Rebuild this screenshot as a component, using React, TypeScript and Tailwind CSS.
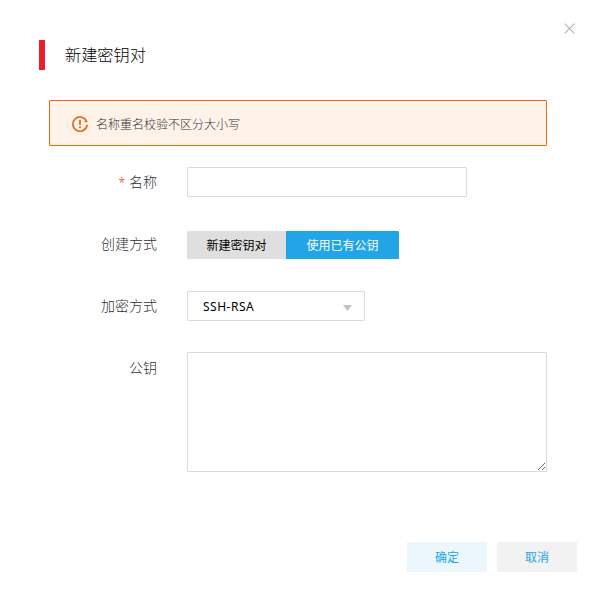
import { useState } from 'react';
import type { ReactNode } from 'react';

const METHODS = [
  { id: 'create', label: '新建密钥对', width: 'w-[99px]' },
  { id: 'import', label: '使用已有公钥', width: 'w-[113px]' },
];

function CloseIcon() {
  return (
    <svg width="11" height="11" viewBox="0 0 11 11" fill="none" stroke="#a9b4bf" strokeWidth="1.1">
      <path d="M0.7 0.7l9.6 9.6M10.3 0.7l-9.6 9.6" />
    </svg>
  );
}

// Open ring with an exclamation mark; the gap sits on the right side.
function WarnIcon() {
  return (
    <svg width="16" height="16" viewBox="0 0 16 16" fill="none" stroke="#ea6a1f">
      <path d="M14.7 5.7A7.1 7.1 0 1 0 15.1 8.6" strokeWidth="1.7" />
      <path d="M12.4 5.6h3" strokeWidth="1.2" />
      <path d="M8 4v5" strokeWidth="1.8" />
      <path d="M8 10.2v1.8" strokeWidth="1.8" />
    </svg>
  );
}

function Field({
  label,
  required = false,
  className = '',
  children,
}: {
  label: string;
  required?: boolean;
  className?: string;
  children: ReactNode;
}) {
  return (
    <div className={`flex items-start ${className}`}>
      <div className="mr-[30px] h-[30px] w-[108px] text-right text-[14px] leading-[30px] font-light text-[#2c2f35]">
        {required && <span className="mr-1 text-[12px] leading-none font-normal text-[#e0706c]">*</span>}
        {label}
      </div>
      {children}
    </div>
  );
}

export default function App() {
  const [method, setMethod] = useState('import');
  const [name, setName] = useState('');
  const [publicKey, setPublicKey] = useState('');

  return (
    <div className="flex h-[590px] w-[596px] flex-col bg-white font-['Noto_Sans','Noto_Sans_CJK_SC',sans-serif] text-[12px] text-black">
      <header className="flex h-[100px] items-start justify-between pr-[21px] pl-[39px]">
        <div className="mt-10 flex items-start">
          <span className="h-[29.5px] w-[6px] border-r border-[#f0107c] bg-[#e8201f]" />
          <h1 className="ml-5 text-[16.2px] leading-[30px] font-light">新建密钥对</h1>
        </div>
        <button type="button" aria-label="关闭" className="mt-[23px]">
          <CloseIcon />
        </button>
      </header>

      <main className="mr-[49px] ml-[49px] flex flex-col">
        <div className="flex h-[46px] w-[498px] items-center rounded-[1px] border border-[#ea6a0f] bg-[#fef2e9] pt-[2px] pl-[22px] text-[#333]">
          <WarnIcon />
          <span className="ml-2 pt-px leading-[18px] font-light">名称重名校验不区分大小写</span>
        </div>

        <Field label="名称" required className="mt-[21px]">
          <input
            value={name}
            onChange={(e) => setName(e.target.value)}
            className="h-[30px] w-[280px] rounded-[1px] border border-[#d8dbe4] px-[15px] outline-none"
          />
        </Field>

        <Field label="创建方式" className="mt-8">
          <div className="mt-[2px] flex">
            {METHODS.map((m) => (
              <button
                key={m.id}
                type="button"
                onClick={() => setMethod(m.id)}
                className={`h-7 pt-[2px] first:rounded-l-[1px] last:rounded-r-[1px] ${m.width} ${
                  m.id === method ? 'bg-[#21a5e7] text-white' : 'bg-[#dfdfdf] text-black'
                }`}
              >
                {m.label}
              </button>
            ))}
          </div>
        </Field>

        <Field label="加密方式" className="mt-8">
          <button
            type="button"
            className="flex h-[30px] w-[178px] items-center justify-between rounded-[1px] border border-[#d8dbe4] pr-3 pl-[15px]"
          >
            <span className="pt-[2px] tracking-[0.5px]">SSH-RSA</span>
            <svg width="9" height="6" viewBox="0 0 9 6" className="mt-[3px]" fill="#bcc1cb">
              <path d="M0 0h9L4.5 6z" />
            </svg>
          </button>
        </Field>

        <Field label="公钥" className="mt-8">
          <textarea
            value={publicKey}
            onChange={(e) => setPublicKey(e.target.value)}
            className="-mt-px h-[120px] w-[360px] resize rounded-[1px] border border-[#d8dbe4] px-[15px] py-[5px] outline-none"
          />
        </Field>
      </main>

      <footer className="mt-[70px] flex justify-end gap-[10px] pr-[19px] text-[#22a4e6]">
        <button type="button" className="h-[30px] w-20 bg-[#ebf7fd] pt-[2px]">
          确定
        </button>
        <button type="button" className="h-[30px] w-20 bg-[#f2f2f2] pt-[2px]">
          取消
        </button>
      </footer>
    </div>
  );
}
